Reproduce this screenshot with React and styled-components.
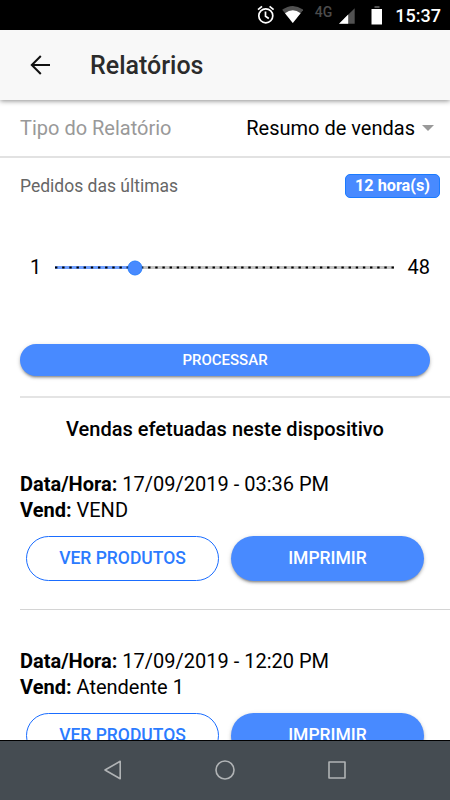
import styled, { createGlobalStyle } from "styled-components";

const GlobalStyle = createGlobalStyle`
  * {
    box-sizing: border-box;
  }

  body {
    margin: 0;
    background-color: #fff;
    font-family: Roboto, "Liberation Sans", sans-serif;
    color: #000;
  }
`;

const Screen = styled.div`
  width: 450px;
  height: 800px;
  display: flex;
  flex-direction: column;
  overflow: hidden;
`;

const StatusBar = styled.div`
  height: 30px;
  flex: none;
  background-color: #000;
  color: #fff;
  display: flex;
  align-items: center;
  justify-content: flex-end;
  padding-right: 9px;
`;

const StatusIcons = styled.svg`
  height: 30px;
  flex: none;
`;

const NetworkType = styled.span`
  margin: 0 6px 0 12px;
  padding-bottom: 7px;
  font-size: 14px;
  font-weight: 500;
  line-height: 16px;
  color: #4c4c4c;
`;

const Clock = styled.span`
  margin-left: 11px;
  font-size: 18px;
  font-weight: 500;
  line-height: 30px;
  padding-top: 2px;
`;

const Header = styled.header`
  height: 70px;
  flex: none;
  display: flex;
  align-items: center;
  padding-left: 30px;
  background-color: #f8f8f8;
  box-shadow: 0 1px 5px rgba(0, 0, 0, 0.45);
  z-index: 1;
`;

const BackIcon = styled.svg`
  width: 20px;
  height: 20px;
  margin-right: 40px;
`;

const Title = styled.h1`
  margin: 0;
  padding-top: 2px;
  font-size: 25px;
  font-weight: 500;
  line-height: 30px;
  color: #2b2b2b;
`;

const Content = styled.main`
  flex: 1;
  min-height: 0;
  overflow: hidden;
`;

const SelectRow = styled.div`
  height: 58px;
  display: flex;
  align-items: center;
  justify-content: space-between;
  padding: 0 16px 0 20px;
  border-bottom: 2px solid #e2e2e2;
  font-size: 20px;
`;

const SelectLabel = styled.span`
  color: #999;
`;

const SelectValue = styled.span`
  display: flex;
  align-items: center;
  gap: 7px;
`;

const Caret = styled.span`
  border: 6px solid transparent;
  border-top-color: #999;
  border-bottom: 0;
`;

const RangeHeader = styled.div`
  height: 55px;
  display: flex;
  align-items: center;
  justify-content: space-between;
  padding: 0 10px 0 20px;
  font-size: 17.5px;
  color: #666;
`;

const Badge = styled.span`
  width: 95px;
  height: 24px;
  border-radius: 5px;
  border: 1px solid #1a7bff;
  background-color: #488aff;
  color: #fff;
  font-size: 16.25px;
  font-weight: 700;
  line-height: 22px;
  text-align: center;
`;

const RangeRow = styled.div`
  height: 109px;
  display: flex;
  align-items: center;
  padding: 0 20px 0 30px;
  font-size: 20px;
`;

const RangeMin = styled.span`
  width: 25px;
  padding-bottom: 2px;
`;

const RangeMax = styled.span`
  margin-left: auto;
  padding-bottom: 2px;
`;

const Track = styled.div`
  position: relative;
  width: 339px;
  height: 3px;
  display: flex;
  align-items: center;
  background: linear-gradient(
    to right,
    #6f9fff ${(props) => props.$value}%,
    #c3c3c3 ${(props) => props.$value}%
  );
`;

const Ticks = styled.svg`
  width: 339px;
  height: 3px;
  stroke: #000;
  stroke-width: 1.8;
  stroke-dasharray: 2.4 4.76;
`;

const Knob = styled.span`
  position: absolute;
  left: calc(${(props) => props.$value}% + 0.65px);
  top: 50%;
  width: 15px;
  height: 15px;
  transform: translate(-50%, -50%);
  border-radius: 50%;
  border: 1px solid #2b80fb;
  background-color: #488aff;
`;

const Button = styled.button`
  display: block;
  height: 45px;
  padding: 0 0 1px;
  border: ${(props) => (props.$outline ? "1.25px solid #1a6dff" : "0")};
  border-radius: 23px;
  background-color: ${(props) => (props.$outline ? "#fff" : "#488aff")};
  box-shadow: ${(props) =>
    props.$outline
      ? "none"
      : "0 3px 2px -2px rgba(0, 0, 0, 0.25), 0 2px 3px rgba(0, 0, 0, 0.2), 0 1px 5px rgba(0, 0, 0, 0.12)"};
  color: ${(props) => (props.$outline ? "#2b7bff" : "#fff")};
  font-family: inherit;
  font-size: 17.5px;
  font-weight: 500;
`;

const ProcessButton = styled(Button)`
  width: 410px;
  height: 31.5px;
  margin: 22px 20px 20.5px;
  padding: 0;
  font-size: 15px;
`;

const Divider = styled.div`
  height: ${(props) => props.$size || 1}px;
  margin-left: 20px;
  background-color: ${(props) => (props.$size ? "#e4e4e4" : "#d4d4d4")};
`;

const SectionTitle = styled.h2`
  margin: 0;
  height: 62px;
  font-size: 20px;
  font-weight: 500;
  line-height: 62px;
  text-align: center;
`;

const Sale = styled.section`
  height: 149px;
  padding: 11px 20px 0;
`;

const SaleDivider = styled(Divider)`
  margin-bottom: 27px;
`;

const SaleLine = styled.p`
  margin: 0;
  font-size: 20px;
  line-height: 26px;
`;

const SaleActions = styled.div`
  display: grid;
  grid-template-columns: 1fr 1fr;
  gap: 12.5px;
  padding: 13px 6.25px 0;
`;

const NavBar = styled.nav`
  height: 60px;
  flex: none;
  display: flex;
  align-items: center;
  justify-content: center;
  gap: 92px;
  padding-bottom: 1px;
  border-top: 1px solid #000;
  background-color: #454c52;
  z-index: 1;
`;

const NavIcon = styled.svg`
  width: 20px;
  height: 20px;
  fill: none;
  stroke: #b0b3b5;
  stroke-width: 1.6;
  stroke-linejoin: round;
`;

const MIN = 1;
const MAX = 48;
const hours = 12;
const percent = ((hours - MIN) / (MAX - MIN)) * 100;

const sales = [
  { date: "17/09/2019 - 03:36 PM", seller: "VEND" },
  { date: "17/09/2019 - 12:20 PM", seller: "Atendente 1" },
];

function App() {
  return (
    <Screen>
      <GlobalStyle />
      <StatusBar>
        {/* alarm, wifi */}
        <StatusIcons width="47" viewBox="255 0 47 30">
          <g fill="none" stroke="#fff" strokeWidth="1.7">
            <circle cx="264.8" cy="15.8" r="7" />
            <path d="M264.5 11.5v4.8l3.3 2.2M257 9.6l4-3.3M272.6 9.6l-4-3.3" />
          </g>
          <path d="M281.2 9.8Q291.8 2 302.4 9.8L291.8 23Z" fill="#515151" />
          <path d="M284 13.2Q291.8 7.2 299.6 13.2L291.8 23Z" fill="#fff" />
        </StatusIcons>
        <NetworkType>4G</NetworkType>
        {/* signal, battery */}
        <StatusIcons width="46" viewBox="338 0 46 30">
          <path d="M339 23.8L354.7 8.2V23.8Z" fill="#515151" />
          <path d="M339 23.8L348.2 14.6V23.8Z" fill="#fff" />
          <path d="M374.5 6h5v2h-5z" fill="#515151" />
          <path d="M371.5 9h10.5v15.5h-10.5z" fill="#fff" />
        </StatusIcons>
        <Clock>15:37</Clock>
      </StatusBar>
      <Header>
        <BackIcon viewBox="0 0 20 20" fill="none" stroke="#111" strokeWidth="2">
          <path d="M20 10H2M10.8 1L1.8 10l9 9" />
        </BackIcon>
        <Title>Relatórios</Title>
      </Header>
      <Content>
        <SelectRow>
          <SelectLabel>Tipo do Relatório</SelectLabel>
          <SelectValue>
            Resumo de vendas
            <Caret />
          </SelectValue>
        </SelectRow>
        <RangeHeader>
          <span>Pedidos das últimas</span>
          <Badge>{hours} hora(s)</Badge>
        </RangeHeader>
        <RangeRow>
          <RangeMin>{MIN}</RangeMin>
          <Track $value={percent}>
            <Ticks>
              <line x1="0" y1="1.5" x2="339" y2="1.5" />
            </Ticks>
            <Knob $value={percent} />
          </Track>
          <RangeMax>{MAX}</RangeMax>
        </RangeRow>
        <ProcessButton>PROCESSAR</ProcessButton>
        <Divider $size={2} />
        <SectionTitle>Vendas efetuadas neste dispositivo</SectionTitle>
        {sales.map((sale) => (
          <div key={sale.date}>
            <Sale>
              <SaleLine>
                <b>Data/Hora:</b> {sale.date}
              </SaleLine>
              <SaleLine>
                <b>Vend:</b> {sale.seller}
              </SaleLine>
              <SaleActions>
                <Button $outline>VER PRODUTOS</Button>
                <Button>IMPRIMIR</Button>
              </SaleActions>
            </Sale>
            <SaleDivider />
          </div>
        ))}
      </Content>
      <NavBar>
        <NavIcon viewBox="0 0 20 20">
          <path d="M17.2 1.3v17.4L2 10z" />
        </NavIcon>
        <NavIcon viewBox="0 0 20 20">
          <circle cx="10" cy="10" r="9" />
        </NavIcon>
        <NavIcon viewBox="0 0 20 20">
          <path d="M2 2h16v16H2z" />
        </NavIcon>
      </NavBar>
    </Screen>
  );
}

export default App;
